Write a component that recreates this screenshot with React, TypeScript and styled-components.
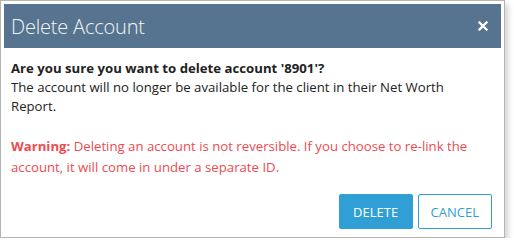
import React from 'react';
import styled, { createGlobalStyle } from 'styled-components';

const color = {
    header: '#56738f',
    border: '#b4b4b4',
    text: '#222222',
    danger: '#ee4b50',
    primary: '#2f9fd6',
    white: '#ffffff',
};

const GlobalStyle = createGlobalStyle`
    html, body {
        margin: 0;
        padding: 0;
        background: ${ color.white };
    }
    body {
        font-family: "Open Sans", "Noto Sans", sans-serif;
    }
`;

const Frame = styled.div`
    width: 505px;
    height: 238px;
    box-sizing: border-box;
    border: 1px solid ${ color.border };
    padding: 3px;
    background: ${ color.white };
    box-shadow: 3px 4px 6px rgba(0, 0, 0, 0.18);
    display: flex;
    flex-direction: column;
`;

const Header = styled.div`
    height: 44px;
    flex: none;
    background: ${ color.header };
    display: flex;
    align-items: center;
    justify-content: space-between;
    padding: 0 13px 0 7px;
`;

const Title = styled.h2`
    margin: 0;
    color: #f4f6f8;
    font-size: 20px;
    font-weight: 300;
    letter-spacing: -0.2px;
`;

const Close = styled.button`
    border: 0;
    background: none;
    padding: 0;
    width: 10px;
    height: 10px;
    display: flex;
    cursor: pointer;
`;

const Body = styled.div`
    flex: 1;
    display: flex;
    flex-direction: column;
    padding: 11px 9px 5px 7px;
    font-size: 13.2px;
    color: ${ color.text };
`;

const Paragraph = styled.p<{ $danger?: boolean }>`
    margin: 0;
    color: ${ p => p.$danger ? color.danger : color.text };
    line-height: ${ p => p.$danger ? '21px' : '19px' };

    & + & { margin-top: 20px; }
`;

const Footer = styled.div`
    margin-top: auto;
    display: flex;
    justify-content: flex-end;
    gap: 5px;
`;

const Button = styled.button<{ $primary?: boolean }>`
    height: 35px;
    min-width: 74px;
    padding: 0 12px;
    box-sizing: border-box;
    border: 1px solid ${ color.primary };
    border-radius: 2px;
    background: ${ p => p.$primary ? color.primary : color.white };
    color: ${ p => p.$primary ? color.white : color.primary };
    font-family: inherit;
    font-size: 13px;
    text-transform: uppercase;
    cursor: pointer;
`;

export default function App() {
    return (
        <>
            <GlobalStyle />
            <Frame>
                <Header>
                    <Title>Delete Account</Title>
                    <Close aria-label="Close">
                        <svg width="10" height="10" viewBox="0 0 10 10">
                            <path d="M1.5 1.5 L8.5 8.5 M8.5 1.5 L1.5 8.5" stroke="#ffffff" strokeWidth="2.3" strokeLinecap="square" />
                        </svg>
                    </Close>
                </Header>
                <Body>
                    <Paragraph>
                        <strong>Are you sure you want to delete account '8901'?</strong><br />
                        The account will no longer be available for the client in their Net Worth Report.
                    </Paragraph>
                    <Paragraph $danger>
                        <strong>Warning:</strong> Deleting an account is not reversible. If you choose to re-link the account, it will come in under a separate ID.
                    </Paragraph>
                    <Footer>
                        <Button $primary>Delete</Button>
                        <Button>Cancel</Button>
                    </Footer>
                </Body>
            </Frame>
        </>
    );
}
